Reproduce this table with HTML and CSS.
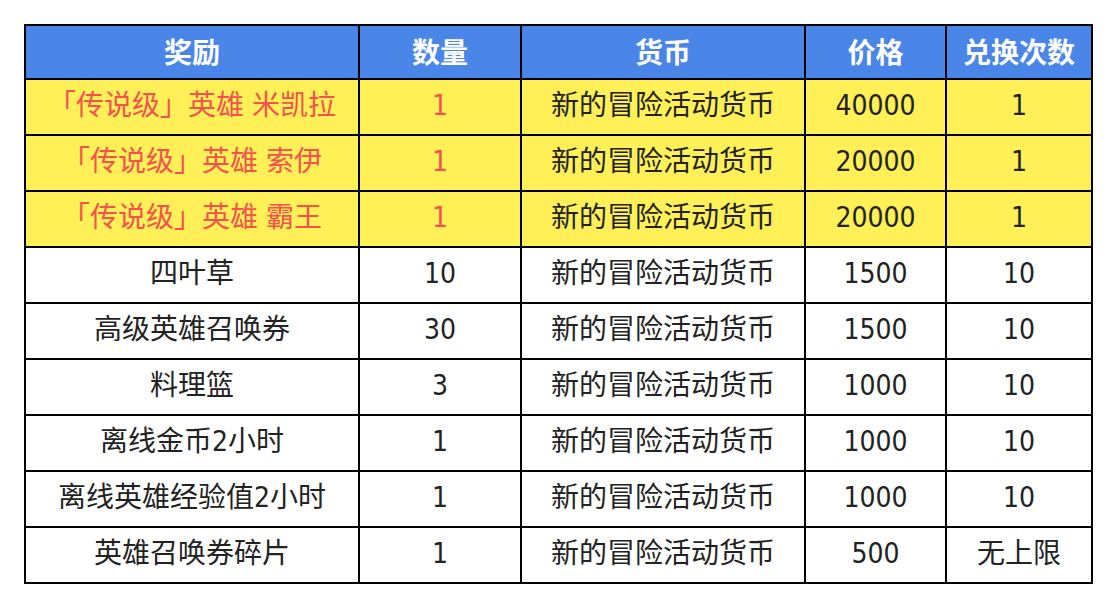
FILE: index.html
```html
<!DOCTYPE html>
<html lang="zh-CN">
<head>
<meta charset="utf-8">
<title>兑换表</title>
<link rel="stylesheet" href="styles.css">
</head>
<body>
<table class="shop">
  <colgroup>
    <col class="c1"><col class="c2"><col class="c3"><col class="c4"><col class="c5">
  </colgroup>
  <thead>
    <tr><th>奖励</th><th>数量</th><th>货币</th><th>价格</th><th>兑换次数</th></tr>
  </thead>
  <tbody>
    <tr class="legend"><td class="red">「传说级」英雄 米凯拉</td><td class="red">1</td><td>新的冒险活动货币</td><td>40000</td><td>1</td></tr>
    <tr class="legend"><td class="red">「传说级」英雄 索伊</td><td class="red">1</td><td>新的冒险活动货币</td><td>20000</td><td>1</td></tr>
    <tr class="legend"><td class="red">「传说级」英雄 霸王</td><td class="red">1</td><td>新的冒险活动货币</td><td>20000</td><td>1</td></tr>
    <tr><td>四叶草</td><td>10</td><td>新的冒险活动货币</td><td>1500</td><td>10</td></tr>
    <tr><td>高级英雄召唤券</td><td>30</td><td>新的冒险活动货币</td><td>1500</td><td>10</td></tr>
    <tr><td>料理篮</td><td>3</td><td>新的冒险活动货币</td><td>1000</td><td>10</td></tr>
    <tr><td>离线金币2小时</td><td>1</td><td>新的冒险活动货币</td><td>1000</td><td>10</td></tr>
    <tr><td>离线英雄经验值2小时</td><td>1</td><td>新的冒险活动货币</td><td>1000</td><td>10</td></tr>
    <tr><td>英雄召唤券碎片</td><td>1</td><td>新的冒险活动货币</td><td>500</td><td>无上限</td></tr>
  </tbody>
</table>
</body>
</html>
```

FILE: styles.css
```css
html, body {
  margin: 0;
  padding: 0;
  background: #ffffff;
}
body {
  padding: 24px 0 0 24px;
  font-family: "DejaVu Sans Condensed", "Noto Sans CJK SC", sans-serif;
}
.shop {
  border-collapse: collapse;
  table-layout: fixed;
  width: 1069px;
  border: 2px solid #000;
}
.c1 { width: 334px; }
.c2 { width: 162px; }
.c3 { width: 284px; }
.c4 { width: 141px; }
.c5 { width: 146px; }
.shop th,
.shop td {
  border: 2px solid #000;
  padding: 0;
  text-align: center;
  vertical-align: middle;
  font-size: 28px;
  line-height: 32px;
  white-space: nowrap;
}
.shop th {
  height: 50px;
  padding-bottom: 2px;
  background: #4a86e8;
  color: #ffffff;
  font-weight: 700;
  font-family: "Noto Sans CJK SC", sans-serif;
}
.shop td {
  height: 51px;
  padding-bottom: 3px;
  color: #222222;
  background: #ffffff;
}
.shop tr.legend td {
  background: #fff058;
}
.shop td.red {
  color: #f5514f;
}
```
